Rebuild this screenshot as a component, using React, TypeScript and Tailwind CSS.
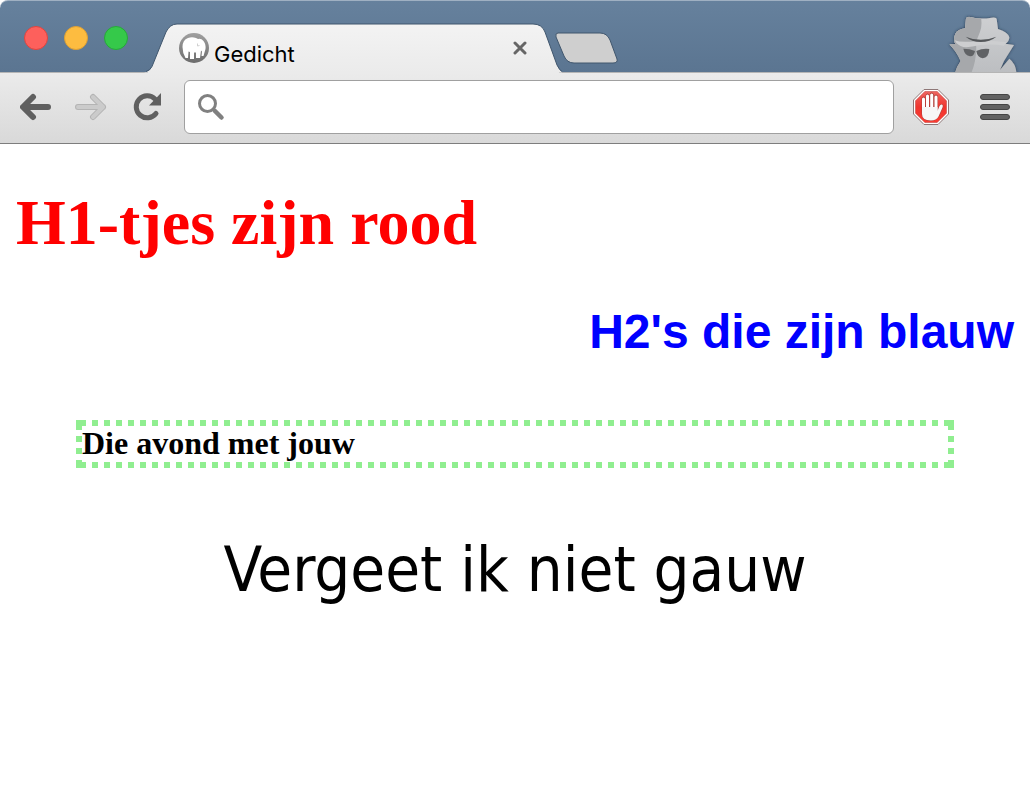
import type { CSSProperties } from 'react';

const green = '#90ee90';
const dash = (dir: string) =>
  `repeating-linear-gradient(${dir}, transparent 0 4px, ${green} 4px 10px, transparent 10px 12px)`;
const corner = `linear-gradient(${green}, ${green})`;

const dottedFrame: CSSProperties = {
  backgroundImage: [
    corner, corner, corner, corner,
    dash('to right'), dash('to right'), dash('to bottom'), dash('to bottom'),
  ].join(', '),
  backgroundRepeat: 'no-repeat',
  backgroundPosition:
    'left top, right top, left bottom, right bottom, left top, left bottom, left top, right top',
  backgroundSize: '6px 6px, 6px 6px, 6px 6px, 6px 6px, 100% 6px, 100% 6px, 6px 100%, 6px 100%',
};

function TrafficLights() {
  return (
    <div className="flex gap-4 pl-6 pt-[25px]">
      <button aria-label="Sluiten" className="size-6 rounded-full border border-[#e0443e] bg-[#fd605c]" />
      <button aria-label="Minimaliseren" className="size-6 rounded-full border border-[#dea034] bg-[#fdbc40]" />
      <button aria-label="Vergroten" className="size-6 rounded-full border border-[#27a83a] bg-[#35c94a]" />
    </div>
  );
}

function Favicon() {
  return (
    <svg viewBox="0 0 30 30" className="size-[30px] shrink-0" aria-hidden="true">
      <defs>
        <linearGradient id="discFill" x1="0" x2="0" y1="0" y2="1">
          <stop offset="0" stopColor="#a0a0a0" />
          <stop offset="1" stopColor="#6c6c6c" />
        </linearGradient>
      </defs>
      <circle cx="15" cy="15" r="15" fill="url(#discFill)" />
      <path
        d="M3.500 14Q3.500 7 9 5Q13 3.500 17 5L19 6Q22 5 24.500 8Q27 11 26.500 16L24.500 23H22.500L23 18.500L22 17.500L21 25H17V19.500H15V26H11V19L9.500 18.500L9 25H6.500Q3.500 20 3.500 14Z"
        fill="#fff"
      />
      <path d="M18.500 10.500V13L20.500 12.500" fill="none" stroke="#d0d0d0" strokeWidth="1" />
    </svg>
  );
}

function Incognito() {
  return (
    <svg viewBox="0 0 270 201" className="h-[67px] w-[90px]" aria-hidden="true">
      <defs>
        <filter id="spyShadow" x="-20%" y="-20%" width="140%" height="140%">
          <feDropShadow dx="0" dy="0" stdDeviation="5" floodColor="#22354a" floodOpacity="0.9" />
        </filter>
        <linearGradient id="spyLight" x1="0" x2="0" y1="0" y2="1">
          <stop offset="0" stopColor="#d2d3d5" />
          <stop offset="1" stopColor="#bcbec1" />
        </linearGradient>
        <clipPath id="spyClip">
          <path d="M78 40Q80 34 92 36Q118 44 155 38Q170 36 170 42L174 72Q205 82 208 97Q208 110 196 116L222 120L192 168L180 195L208 161Q226 174 230 204H45Q50 185 62 168Q50 140 28 118L46 117Q38 104 46 86Q52 74 75 70Z" />
        </clipPath>
      </defs>
      <g filter="url(#spyShadow)">
        <g clipPath="url(#spyClip)">
          <path d="M0 0h270v204H0z" fill="url(#spyLight)" />
          <path d="M0 0H112Q132 50 120 80Q114 96 108 110Q112 160 94 204H0z" fill="#a6a8ab" />
          <path d="M44 106Q60 112 90 110Q150 104 200 112L192 122Q160 116 120 120Q90 128 70 126Q52 122 44 106Z" fill="#cdced0" />
        </g>
      </g>
      <path d="M77 95Q122 114 169 95Q150 111 122 111Q95 111 77 95Z" fill="#54575a" />
      <path d="M70 131Q90 131 105 138Q102 155 90 154Q74 151 70 131ZM109 138Q128 129 148 132Q146 159 128 160Q112 158 109 138Z" fill="#606265" />
    </svg>
  );
}

function TabStrip() {
  return (
    <header className="flex h-[72px] rounded-t-lg border-t border-[#9fb0c2] bg-linear-to-b from-[#66819d] to-[#5b7591]">
      <TrafficLights />
      <div className="relative ml-4 flex h-[72px] w-[418px] shrink-0">
        <svg viewBox="0 0 418 50" className="absolute bottom-0 left-0 h-[50px] w-[418px]" aria-hidden="true">
          <defs>
            <linearGradient id="tabFill" x1="0" x2="0" y1="0" y2="1">
              <stop offset="0" stopColor="#f3f3f3" />
              <stop offset="1" stopColor="#ebebeb" />
            </linearGradient>
          </defs>
          <path d="M0 49.500q6-1 8-6L22 9q4-8 11-8h356q9 0 12 8l12 33q3 7 7 7.500z" fill="url(#tabFill)" />
          <path d="M2 48.500q4-1 6-5L22 9q4-8 11-8h356q9 0 12 8l12 33q3 6 5 6.500" fill="none" stroke="#40566d" strokeWidth="1" />
          <path d="M4 49.500h411" stroke="#ebebeb" strokeWidth="2" />
        </svg>
        <div className="relative flex grow items-start pl-[35px] pr-[30px] pt-8">
          <Favicon />
          <span className="grow pl-[5px] pt-[5px] font-['Inter',sans-serif] text-[22px] leading-8 text-black">Gedicht</span>
          <button aria-label="Tabblad sluiten" className="mt-[3px] flex size-6 items-center justify-center">
            <svg viewBox="0 0 14 14" className="size-[14px]" aria-hidden="true">
              <path d="M2 2l10 10M12 2L2 12" stroke="#666" strokeWidth="3" strokeLinecap="round" />
            </svg>
          </button>
        </div>
      </div>
      <button aria-label="Nieuw tabblad" className="mt-[30px] -ml-2 h-9 w-16 shrink-0">
        <svg viewBox="0 0 64 36" className="h-9 w-16" aria-hidden="true">
          <path d="M4 2h42q7 0 10 7l7 19q1 4-4 4H20q-7 0-10-7L2 6q-1-4 2-4z" fill="#cfcfcf" stroke="#40566d" strokeWidth="1" />
        </svg>
      </button>
      <div className="flex grow items-end justify-end">
        <Incognito />
      </div>
    </header>
  );
}

function Toolbar() {
  return (
    <nav className="flex h-[72px] items-center border-t border-b border-t-[#b5b5b5] border-b-[#7d7d7d] bg-linear-to-b from-[#ebebeb] to-[#d9d9d9] px-5 pb-[2px]">
      <button aria-label="Terug" className="size-8">
        <svg viewBox="0 0 32 32" className="size-8" aria-hidden="true">
          <path d="M28 16H4M13 6L3 16l10 10" fill="none" stroke="#606060" strokeWidth="6" strokeLinecap="round" strokeLinejoin="round" />
        </svg>
      </button>
      <button aria-label="Vooruit" className="ml-[23px] size-8" disabled>
        <svg viewBox="0 0 32 32" className="size-8" aria-hidden="true">
          <path d="M3 16h25M18 6l10 10-10 10" fill="none" stroke="#b4b4b4" strokeWidth="6" strokeLinecap="round" strokeLinejoin="round" />
          <path d="M3 16h25M18 6l10 10-10 10" fill="none" stroke="#cbcbcb" strokeWidth="4" strokeLinecap="round" strokeLinejoin="round" />
        </svg>
      </button>
      <button aria-label="Vernieuwen" className="ml-[25px] size-8">
        <svg viewBox="0 0 32 32" className="size-8" aria-hidden="true">
          <path d="M24 22.500A11 11 0 1 1 23 8" fill="none" stroke="#606060" strokeWidth="5" strokeLinecap="round" />
          <path d="M29 2v12.500H17z" fill="#606060" />
        </svg>
      </button>
      <div className="ml-5 flex h-[54px] grow items-center rounded-md border border-[#a0a0a0] bg-white pl-3">
        <svg viewBox="0 0 28 28" className="size-7 shrink-0" aria-hidden="true">
          <circle cx="10.500" cy="10.500" r="8" fill="none" stroke="#808080" strokeWidth="3" />
          <path d="M18 18l6.500 6.500" stroke="#808080" strokeWidth="4.500" strokeLinecap="round" />
        </svg>
        <input type="text" aria-label="Adres" className="h-full min-w-0 grow px-2 text-[22px] outline-none" />
      </div>
      <button aria-label="Adblock" className="ml-[19px] size-9">
        <svg viewBox="0 0 36 36" className="size-9" aria-hidden="true">
          <defs>
            <linearGradient id="stopRed" x1="0" x2="0" y1="0" y2="1">
              <stop offset="0" stopColor="#ee6661" />
              <stop offset="0.5" stopColor="#f0352e" />
              <stop offset="1" stopColor="#fa3c33" />
            </linearGradient>
          </defs>
          <path d="M11 .5h14L35.500 11v14L25 35.500H11L.5 25V11z" fill="#fff" stroke="#8e7777" strokeWidth="1" />
          <path d="M11.800 2.500h12.400l9.300 9.300v12.400l-9.300 9.300H11.800l-9.300-9.300V11.800z" fill="url(#stopRed)" stroke="#bb3d38" strokeWidth="0.500" />
          <path d="M9 21V10q0-2 1.500-2t1.500 2v7h1V7q0-2 1.500-2T16 7v10h1V6q0-2 1.700-2t1.700 2v11h1V8q0-2 1.600-2t1.600 2v13l2-4q1-2 2.500-1.500 1.500 1 .5 3l-4 9q-2 4-7.600 4Q9 31.500 9 25z" fill="#ad3f3a" stroke="#ad3f3a" strokeWidth="1" />
          <path d="M10.500 10v13M14.500 7v14M18.700 6v14M23 8v14" fill="none" stroke="#fff" strokeWidth="3" strokeLinecap="round" />
          <path d="M9 18h15.500v4l2-5q1-2 2.500-1.500 1.500 1 .5 3l-4 9q-2 4-7.600 4Q9 31.500 9 25z" fill="#f7f7f7" />
        </svg>
      </button>
      <button aria-label="Menu" className="ml-[31px] h-8 w-[30px]">
        <svg viewBox="0 0 30 32" className="h-8 w-[30px]" aria-hidden="true">
          <g fill="#626262" stroke="#454545">
            <rect x="0.500" y="3.500" width="29" height="5" rx="2.500" />
            <rect x="0.500" y="13.500" width="29" height="5" rx="2.500" />
            <rect x="0.500" y="23.500" width="29" height="5" rx="2.500" />
          </g>
        </svg>
      </button>
    </nav>
  );
}

export default function App() {
  return (
    <div className="min-h-screen bg-white text-black">
      <TabStrip />
      <Toolbar />
      <main className="px-4 pt-[42px]">
        <h1 className="font-['Liberation_Serif',serif] text-[64px] leading-[74px] font-bold text-[#ff0000]">
          H1-tjes zijn rood
        </h1>
        <h2 className="mt-11 text-right font-['Liberation_Sans',sans-serif] text-[48px] leading-[56px] font-bold text-[#0000ff]">
          H2's die zijn blauw
        </h2>
        <h3
          style={dottedFrame}
          className="mx-[60px] mt-[60px] px-[6px] pt-[5px] pb-[7px] font-['Liberation_Serif',serif] text-[32px] leading-[36px] font-bold"
        >
          Die avond met jouw
        </h3>
        <p className="mt-[62px] text-center font-['DejaVu_Sans_Condensed','Noto_Sans',sans-serif] text-[63px] leading-[80px]">
          Vergeet ik niet gauw
        </p>
      </main>
    </div>
  );
}
